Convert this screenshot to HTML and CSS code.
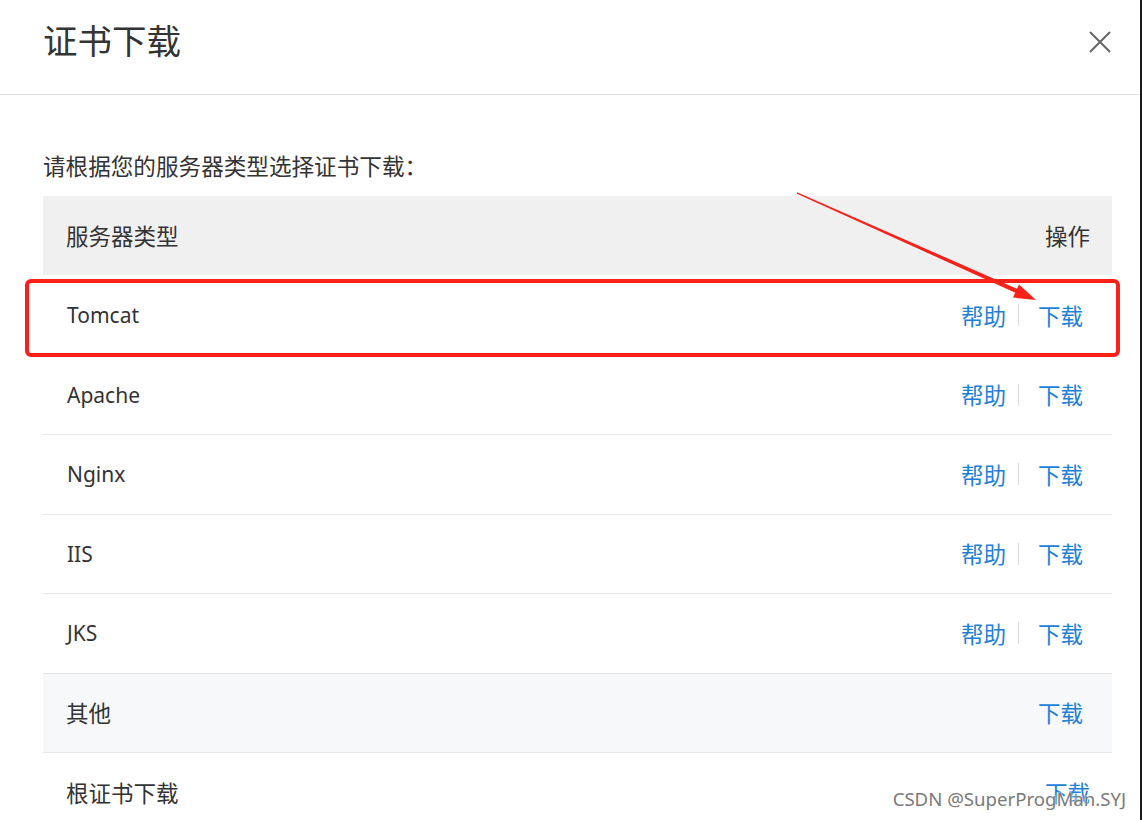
FILE: index.html
```html
<!DOCTYPE html>
<html lang="zh-CN">
<head>
  <meta charset="UTF-8">
  <title>证书下载</title>
  <link rel="stylesheet" href="styles.css">
</head>
<body>
  <div class="dialog">
    <div class="dialog-header">
      <h2 class="dialog-title">证书下载</h2>
      <span class="close">
        <svg width="22" height="22" viewBox="0 0 22 22"><path d="M1 1 L21 21 M21 1 L1 21" stroke="#666" stroke-width="2" fill="none"/></svg>
      </span>
    </div>

    <div class="dialog-body">
      <p class="intro">请根据您的服务器类型选择证书下载：</p>

      <div class="cert-table">
        <div class="row head">
          <span class="name">服务器类型</span>
          <span class="ops">操作</span>
        </div>
        <div class="row">
          <span class="name en">Tomcat</span>
          <span class="ops"><a>帮助</a><i class="sep"></i><a>下载</a></span>
        </div>
        <div class="row">
          <span class="name en">Apache</span>
          <span class="ops"><a>帮助</a><i class="sep"></i><a>下载</a></span>
        </div>
        <div class="row">
          <span class="name en">Nginx</span>
          <span class="ops"><a>帮助</a><i class="sep"></i><a>下载</a></span>
        </div>
        <div class="row">
          <span class="name en">IIS</span>
          <span class="ops"><a>帮助</a><i class="sep"></i><a>下载</a></span>
        </div>
        <div class="row">
          <span class="name en">JKS</span>
          <span class="ops"><a>帮助</a><i class="sep"></i><a>下载</a></span>
        </div>
        <div class="row grey">
          <span class="name">其他</span>
          <span class="ops"><a>下载</a></span>
        </div>
        <div class="row last">
          <span class="name">根证书下载</span>
          <span class="ops"><a>下载</a></span>
        </div>
      </div>
    </div>

    <!-- annotation drawn on top of the screenshot -->
    <svg class="markup" width="1142" height="820" viewBox="0 0 1142 820">
      <rect x="27" y="281" width="1091" height="74" rx="4" fill="none" stroke="#fb2018" stroke-width="4"/>
      <polygon points="797,192.3 797,193.7 1017,293.5 1018.5,289.5" fill="#fb2018"/>
      <polygon points="1036,300 1013,297.6 1019,284.4" fill="#fb2018"/>
    </svg>

    <div class="watermark">CSDN @SuperProgMan.SYJ</div>
  </div>
</body>
</html>
```

FILE: styles.css
```css
body {
  margin: 0;
  background-color: #fff;
  font-family: "Noto Sans", "Noto Sans CJK SC", sans-serif;
  color: #333;
}
.dialog {
  position: relative;
  width: 1142px;
  height: 820px;
  overflow: hidden;
  box-sizing: border-box;
  border-right: 2px solid #1c1c1c;
}
.dialog-header {
  height: 95px;
  box-sizing: border-box;
  display: flex;
  align-items: center;
  justify-content: space-between;
  padding: 0 29px 13px 43px;
  border-bottom: 1px solid #e3e3e3;
}
.dialog-title {
  margin: 0;
  font-size: 34.5px;
  font-weight: normal;
  line-height: 40px;
  color: #333;
}
.close {
  display: flex;
  margin-top: 2px;
}
.dialog-body {
  padding: 0 28px 0 43px;
}
.intro {
  margin: 56px 0 13px 0;
  font-size: 22.6px;
  line-height: 32px;
  color: #333;
}
.cert-table {
  width: 1069px;
}
.row {
  display: flex;
  align-items: center;
  justify-content: space-between;
  height: 78.5px;
  padding: 0 29px 0 23px;
  border-bottom: 1px solid #e8e8e8;
  font-size: 22.5px;
}
.row.head {
  height: 79px;
  background-color: #f0f0f0;
  padding-right: 22px;
  border-bottom-color: #fff;
}
.row.grey {
  background-color: #f7f8fa;
  border-top: 1px solid #e8e8e8;
  margin-top: -1px;
}
.row.last {
  padding-right: 22px;
  border-bottom: none;
}
.name {
  color: #333;
}
.name.en {
  font-size: 21px;
  padding-left: 1px;
}
.ops {
  display: flex;
  align-items: center;
}
.ops a {
  color: #1d7fd6;
  cursor: pointer;
}
.sep {
  display: inline-block;
  width: 1px;
  height: 22px;
  background-color: #dcdcdc;
  margin: 0 19px 0 12px;
}
.markup {
  position: absolute;
  left: 0;
  top: 0;
  pointer-events: none;
}
.watermark {
  position: absolute;
  right: 14px;
  bottom: 9px;
  font-size: 18.6px;
  color: #7a7a7a;
  text-shadow: 0 0 2px #fff, 0 0 2px #fff;
}
```
